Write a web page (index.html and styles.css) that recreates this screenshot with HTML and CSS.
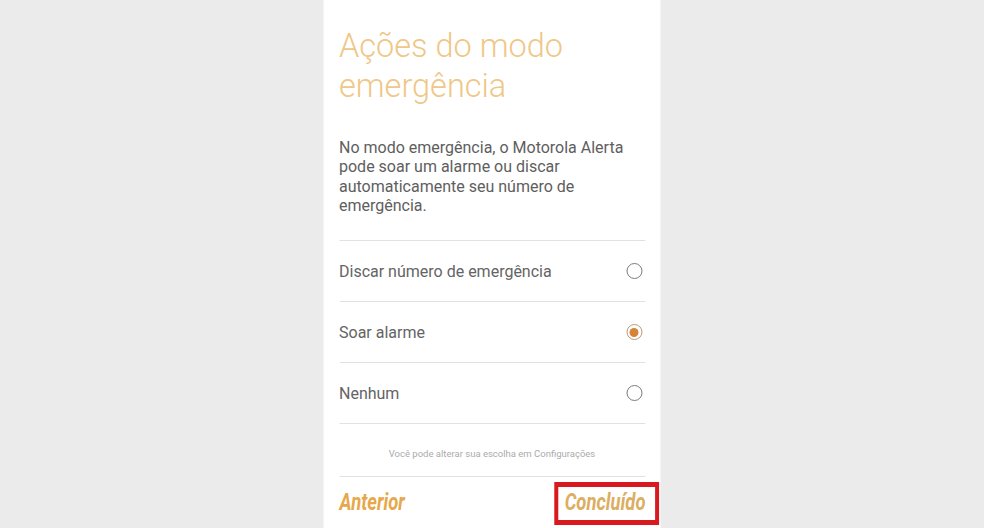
FILE: index.html
```html
<!DOCTYPE html>
<html lang="pt">
<head>
<meta charset="utf-8">
<title>Ações do modo emergência</title>
<link rel="stylesheet" href="styles.css">
</head>
<body>
<main class="panel">
  <h1 class="title">Ações do modo emergência</h1>
  <p class="intro">No modo emergência, o Motorola Alerta pode soar um alarme ou discar automaticamente seu número de emergência.</p>
  <ul class="options">
    <li class="option"><span class="label">Discar número de emergência</span><span class="radio"></span></li>
    <li class="option"><span class="label">Soar alarme</span><span class="radio checked"></span></li>
    <li class="option"><span class="label">Nenhum</span><span class="radio"></span></li>
  </ul>
  <p class="note">Você pode alterar sua escolha em Configurações</p>
  <div class="actions">
    <span class="btn btn-prev">Anterior</span>
    <span class="btn btn-done">Concluído</span>
  </div>
</main>
</body>
</html>
```
FILE: styles.css
```css
html, body {
  margin: 0;
  padding: 0;
}
body {
  background: #ebebeb;
  font-family: Roboto, "Noto Sans", sans-serif;
  height: 528px;
  overflow: hidden;
}
.panel {
  width: 337px;
  height: 528px;
  margin: 0 auto;
  background: #ffffff;
  box-sizing: border-box;
  padding: 26px 15px 0 16px;
  transform: translateX(-0.5px);
}
.title {
  margin: 0;
  font-weight: 300;
  font-size: 32.5px;
  line-height: 40px;
  color: #efc787;
  width: 260px;
}
.intro {
  margin: 32px 0 25px;
  font-size: 16px;
  line-height: 19.3px;
  color: #5e5e5e;
}
.options {
  list-style: none;
  margin: 0;
  padding: 0;
}
.option {
  height: 60px;
  border-top: 1px solid #e2e2e2;
  display: flex;
  align-items: center;
  justify-content: space-between;
  font-size: 16px;
  color: #646464;
}
.option:last-child {
  border-bottom: 1px solid #e2e2e2;
}
.radio {
  width: 14px;
  height: 14px;
  border: 1.6px solid #7b7b7b;
  border-radius: 50%;
  margin-right: 3px;
  box-sizing: content-box;
  display: flex;
  align-items: center;
  justify-content: center;
}
.radio.checked {
  border-color: #b79a78;
}
.radio.checked::before {
  content: "";
  width: 9px;
  height: 9px;
  border-radius: 50%;
  background: #d5843a;
}
.note {
  margin: 0;
  height: 53px;
  box-sizing: border-box;
  padding-top: 7px;
  display: flex;
  align-items: center;
  justify-content: center;
  font-size: 9.5px;
  color: #ababab;
  border-bottom: 1px solid #e2e2e2;
}
.actions {
  height: 51px;
  display: flex;
  align-items: center;
  justify-content: space-between;
}
.btn {
  display: inline-block;
  font-weight: 700;
  font-style: italic;
  font-size: 23px;
  line-height: 28px;
  color: #e6a84a;
  transform: scaleX(0.8);
}
.btn-prev {
  transform-origin: left center;
}
.btn-done {
  transform-origin: right center;
  position: relative;
  color: #dcae62;
}
.btn-done::after {
  content: "";
  position: absolute;
  left: -13px;
  right: -17px;
  top: -7px;
  bottom: -8px;
  border: 5px solid #d81920;
}
```
